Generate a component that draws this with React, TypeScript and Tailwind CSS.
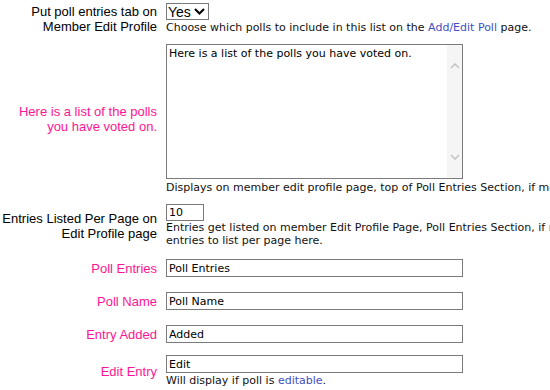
import React from "react";

const help = "font-['DejaVu_Sans',sans-serif] text-[11px] leading-[13px] text-[#111] whitespace-nowrap";
const link = "text-[#3f4fc4]";

const Label = ({ children, pink }: { children: React.ReactNode; pink?: boolean }) => (
  <div
    className={
      "w-[157px] shrink-0 text-right font-['Liberation_Sans',Arial,sans-serif] text-[13px] leading-[15px] " +
      (pink ? "text-[#ff1493]" : "text-black")
    }
  >
    {children}
  </div>
);

const TextBox = ({ value }: { value: string }) => (
  <input
    readOnly
    value={value}
    className="block h-[18px] w-[297px] border border-[#7a7a7a] bg-white pl-[2px] font-['DejaVu_Sans',sans-serif] text-[11px] text-black outline-none"
  />
);

const App = () => {
  return (
    <div className="h-[390px] w-[550px] overflow-hidden bg-white">
      <div className="flex w-[900px] flex-col">
        {/* tab toggle */}
        <div className="mt-[3px] flex items-center">
          <Label>
            Put poll entries tab on
            <br />
            Member Edit Profile
          </Label>
          <div className="ml-[9px]">
            <div className="flex h-[17px] w-[43px] items-center justify-between border border-[#7a7a7a] bg-white pl-[1px] pr-[3px]">
              <span className="font-['Liberation_Sans',Arial,sans-serif] text-[14px] leading-none text-black">Yes</span>
              <svg width="11" height="7" viewBox="0 0 11 7">
                <path d="M1 1 L5.5 5.5 L10 1" fill="none" stroke="#000" strokeWidth="2" />
              </svg>
            </div>
            <div className={help + " mt-[1px]"}>
              Choose which polls to include in this list on the <span className={link}>Add/Edit Poll</span> page.
            </div>
          </div>
        </div>

        {/* intro text */}
        <div className="mt-[10px] flex items-center">
          <Label pink>
            Here is a list of the polls
            <br />
            you have voted on.
          </Label>
          <div className="ml-[9px]">
            <div className="flex h-[135px] w-[297px] border border-[#7a7a7a] bg-white">
              <div className={help + " flex-1 pl-[2px] pt-[2px] text-black"}>
                Here is a list of the polls you have voted on.
              </div>
              <div className="flex w-[15px] flex-col items-center justify-between bg-[#f5f5f5] pb-[18px] pt-[18px]">
                <svg width="10" height="6" viewBox="0 0 10 6">
                  <path d="M1 5 L5 1 L9 5" fill="none" stroke="#c4c4c4" strokeWidth="1.6" />
                </svg>
                <svg width="10" height="6" viewBox="0 0 10 6">
                  <path d="M1 1 L5 5 L9 1" fill="none" stroke="#c4c4c4" strokeWidth="1.6" />
                </svg>
              </div>
            </div>
            <div className={help + " mt-[2px]"}>
              Displays on member edit profile page, top of Poll Entries Section, if member has voted on any polls.
            </div>
          </div>
        </div>

        {/* per page */}
        <div className="mt-[10px] flex items-center">
          <Label>
            Entries Listed Per Page on
            <br />
            Edit Profile page
          </Label>
          <div className="ml-[9px]">
            <input
              readOnly
              value="10"
              className="block h-[17px] w-[38px] border border-[#7a7a7a] bg-white pl-[2px] font-['DejaVu_Sans',sans-serif] text-[11px] text-black outline-none"
            />
            <div className={help}>
              Entries get listed on member Edit Profile Page, Poll Entries Section, if member has voted. Set the number of
              <br />
              entries to list per page here.
            </div>
          </div>
        </div>

        <div className="mt-[12px] flex items-center">
          <Label pink>Poll Entries</Label>
          <div className="ml-[9px]">
            <TextBox value="Poll Entries" />
          </div>
        </div>

        <div className="mt-[15px] flex items-center">
          <Label pink>Poll Name</Label>
          <div className="ml-[9px]">
            <TextBox value="Poll Name" />
          </div>
        </div>

        <div className="mt-[15px] flex items-center">
          <Label pink>Entry Added</Label>
          <div className="ml-[9px]">
            <TextBox value="Added" />
          </div>
        </div>

        <div className="mt-[12px] flex items-center">
          <Label pink>Edit Entry</Label>
          <div className="ml-[9px]">
            <TextBox value="Edit" />
            <div className={help + " mt-[1px]"}>
              Will display if poll is <span className={link}>editable</span>.
            </div>
          </div>
        </div>
      </div>
    </div>
  );
};

export default App;
